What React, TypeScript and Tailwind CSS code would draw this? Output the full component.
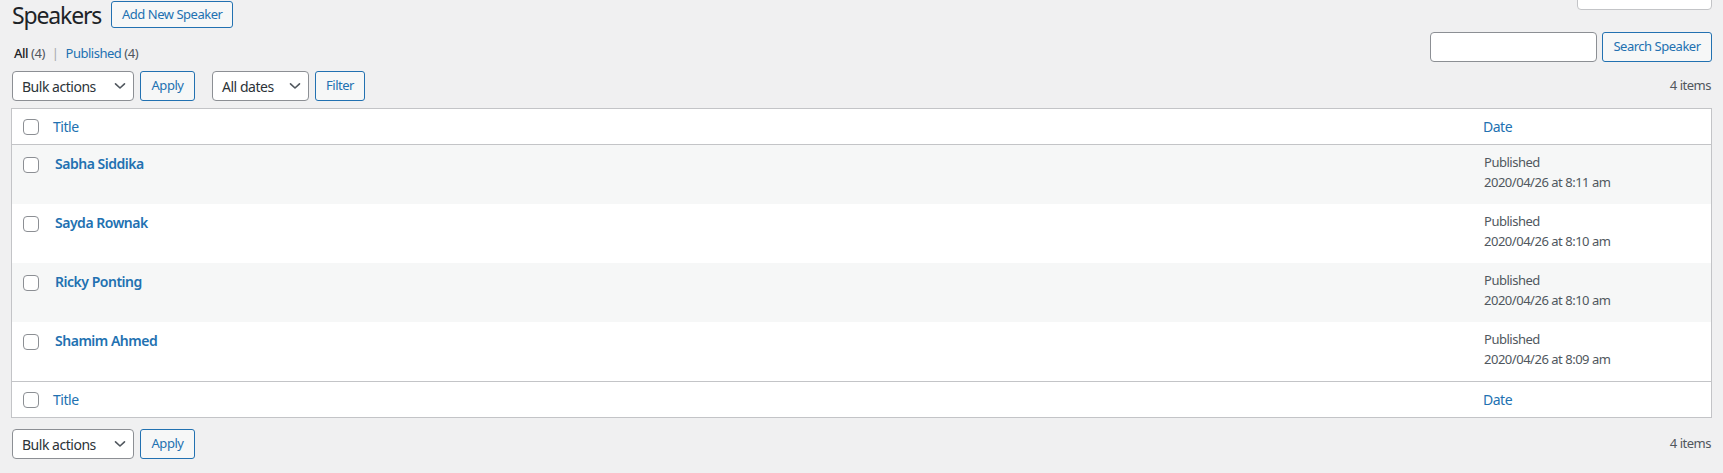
import React from "react";

/* ── small pieces ── */
function Check() {
  return <span className="block w-4 h-4 rounded-[4px] border border-[#8c8f94] bg-white" />;
}

function Chevron() {
  return (
    <svg width="12" height="8" viewBox="0 0 12 8" fill="none" className="shrink-0">
      <path d="M1.5 1.8 L6 6 L10.5 1.8" stroke="#50575e" strokeWidth="1.6" strokeLinecap="round" strokeLinejoin="round" />
    </svg>
  );
}

function Select({ label, width }: { label: string; width: string }) {
  return (
    <div
      className={`flex items-center justify-between h-[30px] ${width} pl-[9px] pr-[7px] rounded-[4px] border border-[#8c8f94] bg-white text-[14px] text-[#2c3338]`}
    >
      <span>{label}</span>
      <Chevron />
    </div>
  );
}

function Btn({ children, className = "" }: { children: React.ReactNode; className?: string }) {
  return (
    <button
      className={`flex items-center justify-center h-[30px] rounded-[3px] border border-[#2271b1] bg-[#f6f7f7] text-[13px] text-[#2271b1] ${className}`}
    >
      {children}
    </button>
  );
}

function BulkBar({ withFilter = false }: { withFilter?: boolean }) {
  return (
    <div className="flex items-center justify-between h-[30px]">
      <div className="flex items-center pl-[1px]">
        <Select label="Bulk actions" width="w-[122px]" />
        <Btn className="ml-[6px] w-[55px]">Apply</Btn>
        {withFilter && (
          <>
            <Select label="All dates" width="w-[97px] ml-[17px]" />
            <Btn className="ml-[6px] w-[50px]">Filter</Btn>
          </>
        )}
      </div>
      <span className="text-[13px] text-[#50575e] pr-[1px]">4 items</span>
    </div>
  );
}

const speakers = [
  { name: "Sabha Siddika", date: "2020/04/26 at 8:11 am" },
  { name: "Sayda Rownak", date: "2020/04/26 at 8:10 am" },
  { name: "Ricky Ponting", date: "2020/04/26 at 8:10 am" },
  { name: "Shamim Ahmed", date: "2020/04/26 at 8:09 am" },
];

function HeadRow({ top }: { top?: boolean }) {
  return (
    <div
      className={`grid grid-cols-[41px_1fr_228px] items-center h-[36px] bg-white ${
        top ? "border-b border-[#c3c4c7]" : "border-t border-[#c3c4c7]"
      }`}
    >
      <div className="pl-[11px]"><Check /></div>
      <span className="text-[14px] text-[#2271b1]">Title</span>
      <span className="text-[14px] text-[#2271b1]">Date</span>
    </div>
  );
}

export default function App() {
  return (
    <div
      className="relative min-h-screen bg-[#f0f0f1] px-[11px] overflow-hidden tracking-[-0.03em]"
      style={{ fontFamily: '"Noto Sans", "Open Sans", sans-serif' }}
    >
      {/* screen options tab, mostly scrolled away */}
      <div className="absolute right-[11px] top-[-20px] w-[135px] h-[30px] bg-white border border-[#c3c4c7] rounded-b-[4px]" />

      {/* title row */}
      <div className="flex items-start h-[30px]">
        <h1 className="ml-[1px] text-[23px] leading-[30px] text-[#1d2327] font-normal tracking-[-0.05em]">Speakers</h1>
        <button className="ml-[10px] mt-[1px] h-[27px] w-[122px] rounded-[3px] border border-[#2271b1] bg-[#f6f7f7] text-[13px] text-[#2271b1]">
          Add New Speaker
        </button>
      </div>

      {/* views + search */}
      <div className="flex justify-between items-start mt-[2px] h-[30px]">
        <div className="mt-[11px] pl-[3px] text-[13px] leading-[20px] text-[#50575e]">
          <span className="font-medium text-[#1d2327]">All</span> (4)
          <span className="mx-[7px] text-[#a7aaad]">|</span>
          <span className="text-[#2271b1]">Published</span> (4)
        </div>
        <div className="flex items-center gap-[5px]">
          <div className="w-[167px] h-[30px] rounded-[4px] border border-[#8c8f94] bg-white" />
          <Btn className="w-[110px]">Search Speaker</Btn>
        </div>
      </div>

      {/* top bulk bar */}
      <div className="mt-[9px]">
        <BulkBar withFilter />
      </div>

      {/* list table */}
      <div className="mt-[7px] border border-[#c3c4c7] bg-white">
        <HeadRow top />
        {speakers.map((s, i) => (
          <div
            key={s.name}
            className={`grid grid-cols-[41px_1fr_228px] h-[59px] ${i % 2 === 0 ? "bg-[#f6f7f7]" : "bg-white"}`}
          >
            <div className="pl-[11px] pt-[12px]"><Check /></div>
            <div className="pt-[8px] pl-[2px] text-[14px] leading-[21px] font-semibold text-[#2271b1]">{s.name}</div>
            <div className="pt-[8px] pl-[1px] text-[13px] leading-[19.5px] text-[#50575e]">
              <div>Published</div>
              <div>{s.date}</div>
            </div>
          </div>
        ))}
        <HeadRow />
      </div>

      {/* bottom bulk bar */}
      <div className="mt-[11px]">
        <BulkBar />
      </div>
    </div>
  );
}
